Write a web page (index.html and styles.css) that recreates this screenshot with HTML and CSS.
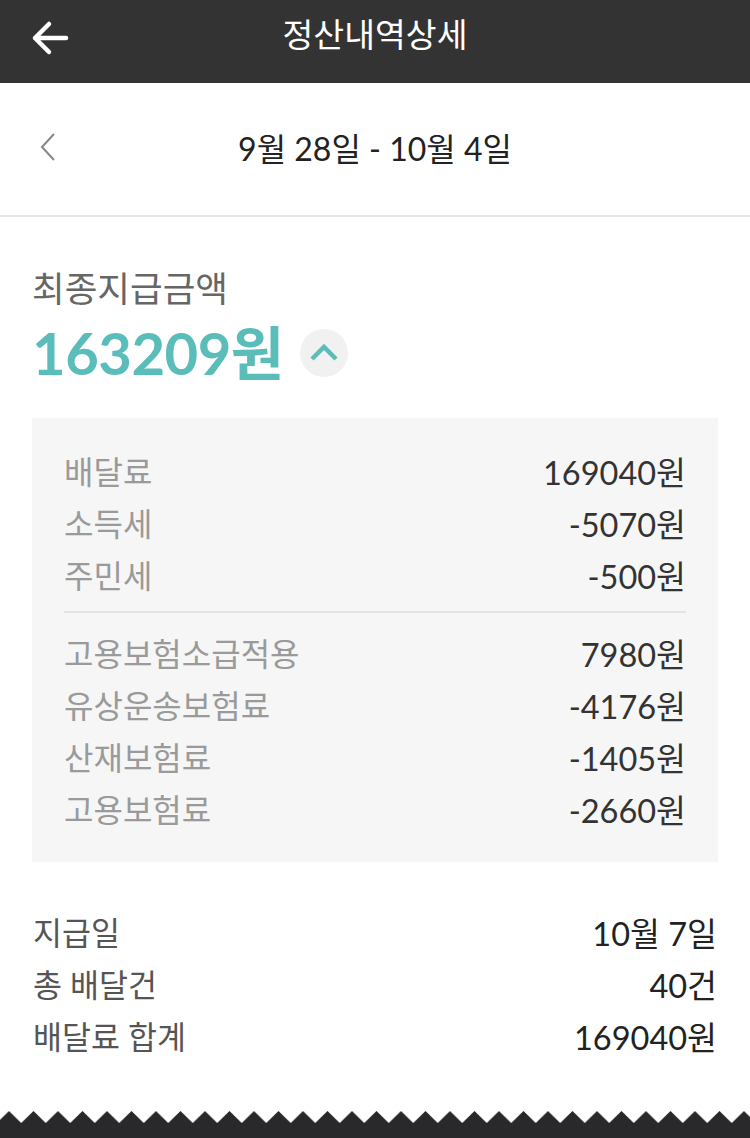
FILE: index.html
```html
<!DOCTYPE html>
<html lang="ko">
<head>
<meta charset="utf-8">
<title>정산내역상세</title>
<link rel="stylesheet" href="styles.css">
</head>
<body>
<div class="page">
  <header class="topbar">
    <span class="back-btn">
      <svg width="40" height="36" viewBox="0 0 40 36"><path d="M5 18 H36 M19 4 L5 18 L19 32" fill="none" stroke="#fff" stroke-width="4.5" stroke-linecap="round" stroke-linejoin="round"/></svg>
    </span>
    <h1 class="title">정산내역상세</h1>
  </header>

  <div class="period">
    <span class="prev">
      <svg width="16" height="28" viewBox="0 0 16 28"><polyline points="14,1 2,14 14,27" fill="none" stroke="#888" stroke-width="2"/></svg>
    </span>
    <span class="period-text">9월 28일 - 10월 4일</span>
  </div>
  <div class="rule"></div>

  <section class="summary">
    <div class="summary-label">최종지급금액</div>
    <div class="amount-row">
      <span class="amount">163209원</span>
      <span class="toggle">
        <svg width="28" height="18" viewBox="0 0 28 18"><polyline points="2,16 14,4 26,16" fill="none" stroke="#5bbdb9" stroke-width="4.5"/></svg>
      </span>
    </div>
  </section>

  <div class="detail-box">
    <div class="row"><span class="k">배달료</span><span class="v">169040원</span></div>
    <div class="row"><span class="k">소득세</span><span class="v">-5070원</span></div>
    <div class="row"><span class="k">주민세</span><span class="v">-500원</span></div>
    <div class="box-rule"></div>
    <div class="row"><span class="k">고용보험소급적용</span><span class="v">7980원</span></div>
    <div class="row"><span class="k">유상운송보험료</span><span class="v">-4176원</span></div>
    <div class="row"><span class="k">산재보험료</span><span class="v">-1405원</span></div>
    <div class="row"><span class="k">고용보험료</span><span class="v">-2660원</span></div>
  </div>

  <div class="info">
    <div class="row"><span class="k">지급일</span><span class="v">10월 7일</span></div>
    <div class="row"><span class="k">총 배달건</span><span class="v">40건</span></div>
    <div class="row"><span class="k">배달료 합계</span><span class="v">169040원</span></div>
  </div>

  <footer class="zigzag">
    <svg width="750" height="27" viewBox="0 0 750 27">
      <defs>
        <pattern id="teeth" x="-3.25" y="0" width="24.5" height="12" patternUnits="userSpaceOnUse">
          <polygon points="0,12 12.25,0 24.5,12" fill="#29292c"/>
        </pattern>
      </defs>
      <rect x="0" y="0" width="750" height="12" fill="url(#teeth)"/>
      <rect x="0" y="12" width="750" height="15" fill="#29292c"/>
    </svg>
  </footer>
</div>
</body>
</html>
```

FILE: styles.css
```css
* { box-sizing: border-box; }
html, body { margin: 0; padding: 0; background: #fff; }
body {
  font-family: Lato, "Noto Sans CJK KR", sans-serif;
  color: #333;
}
.page {
  width: 750px;
  height: 1138px;
  overflow: hidden;
  display: flex;
  flex-direction: column;
}
.topbar {
  position: relative;
  height: 83px;
  background: #333333;
  display: flex;
  align-items: center;
  justify-content: center;
  flex-shrink: 0;
}
.back-btn {
  position: absolute;
  left: 30px;
  top: 20px;
  display: flex;
}
.title {
  margin: 0;
  font-size: 33.5px;
  font-weight: 400;
  color: #fff;
  line-height: 1;
  margin-top: -14px;
}
.period {
  position: relative;
  height: 132px;
  display: flex;
  align-items: center;
  justify-content: center;
  flex-shrink: 0;
}
.prev {
  position: absolute;
  left: 40px;
  top: 50px;
  display: flex;
}
.period-text {
  font-size: 32px;
  color: #222;
  line-height: 1;
}
.rule {
  height: 2px;
  background: #e6e6e6;
  flex-shrink: 0;
}
.summary {
  padding: 51px 32px 0;
}
.summary-label {
  font-size: 35.5px;
  color: #666;
  line-height: 42px;
  height: 42px;
}
.amount-row {
  margin-top: 11px;
  height: 64px;
  display: flex;
  align-items: center;
  gap: 16px;
}
.amount {
  font-size: 58px;
  font-weight: 700;
  color: #5bbdb9;
  line-height: 1;
  letter-spacing: -0.5px;
}
.toggle {
  width: 48px;
  height: 48px;
  border-radius: 50%;
  background: #f1f1f1;
  display: flex;
  align-items: center;
  justify-content: center;
  padding-bottom: 3px;
}
.detail-box {
  margin: 33px 32px 0;
  background: #f6f6f6;
  padding: 26px 32px 28px;
}
.row {
  height: 52px;
  display: flex;
  align-items: center;
  justify-content: space-between;
}
.detail-box .k {
  font-size: 32px;
  color: #9a9a9a;
}
.detail-box .v {
  font-size: 32.5px;
  color: #333;
}
.box-rule {
  height: 2px;
  background: #e4e4e4;
  margin: 11px 0 13px;
}
.info {
  margin: 43px 33px 0;
}
.info .k {
  font-size: 31.5px;
  color: #555;
}
.info .v {
  font-size: 32.5px;
  color: #222;
}
.zigzag {
  margin-top: auto;
  height: 27px;
  display: flex;
}
```
